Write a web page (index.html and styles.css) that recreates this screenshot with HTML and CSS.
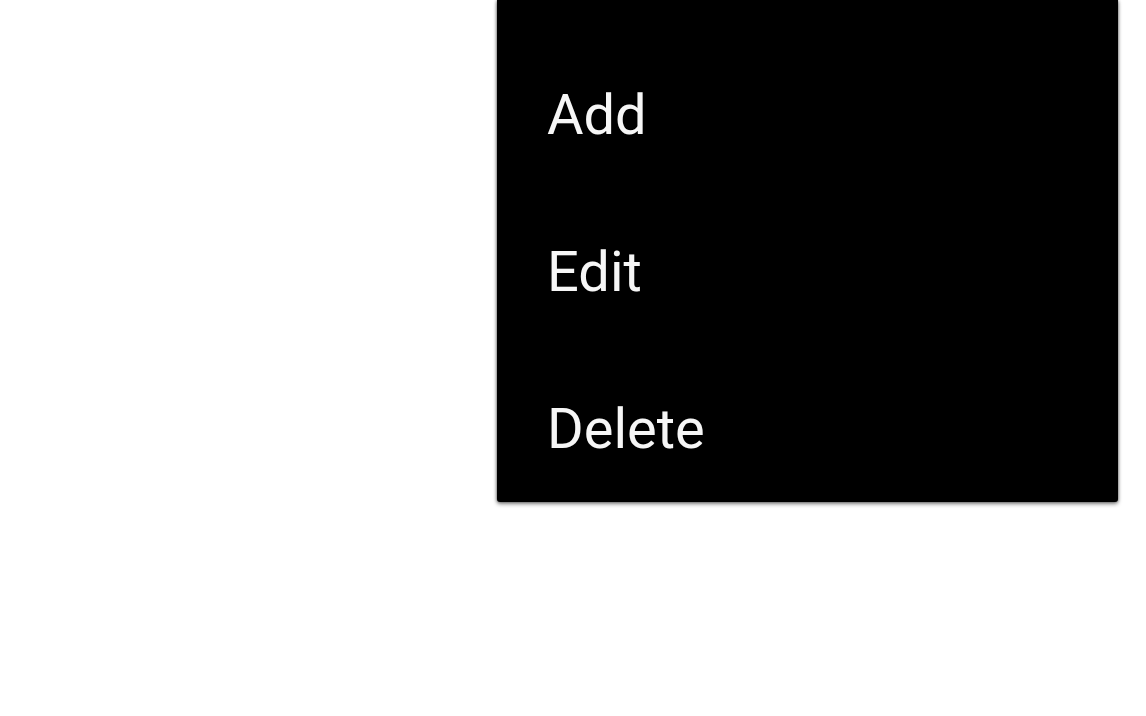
FILE: index.html
```html
<!DOCTYPE html>
<html>
<head>
<meta charset="utf-8">
<link rel="stylesheet" href="styles.css">
</head>
<body>
<div class="page">
  <ul class="menu">
    <li class="item">Add</li>
    <li class="item">Edit</li>
    <li class="item">Delete</li>
  </ul>
</div>
</body>
</html>
```
FILE: styles.css
```css
html, body {
  margin: 0;
  padding: 0;
  background: #ffffff;
}
.page {
  width: 1146px;
  height: 716px;
  overflow: hidden;
  padding-left: 497px;
  box-sizing: border-box;
}
.menu {
  list-style: none;
  margin: 0;
  padding: 37px 0 0 0;
  width: 621px;
  height: 502px;
  box-sizing: border-box;
  background: #000;
  border-radius: 0 0 3px 3px;
  box-shadow: 0 2px 4px rgba(0,0,0,0.45), 0 0 3px rgba(0,0,0,0.5);
  overflow: hidden;
}
.item {
  height: 157px;
  line-height: 157px;
  padding-left: 50px;
  font-family: Roboto, "Noto Sans", sans-serif;
  font-size: 56px;
  color: #f6f6f6;
}
```
